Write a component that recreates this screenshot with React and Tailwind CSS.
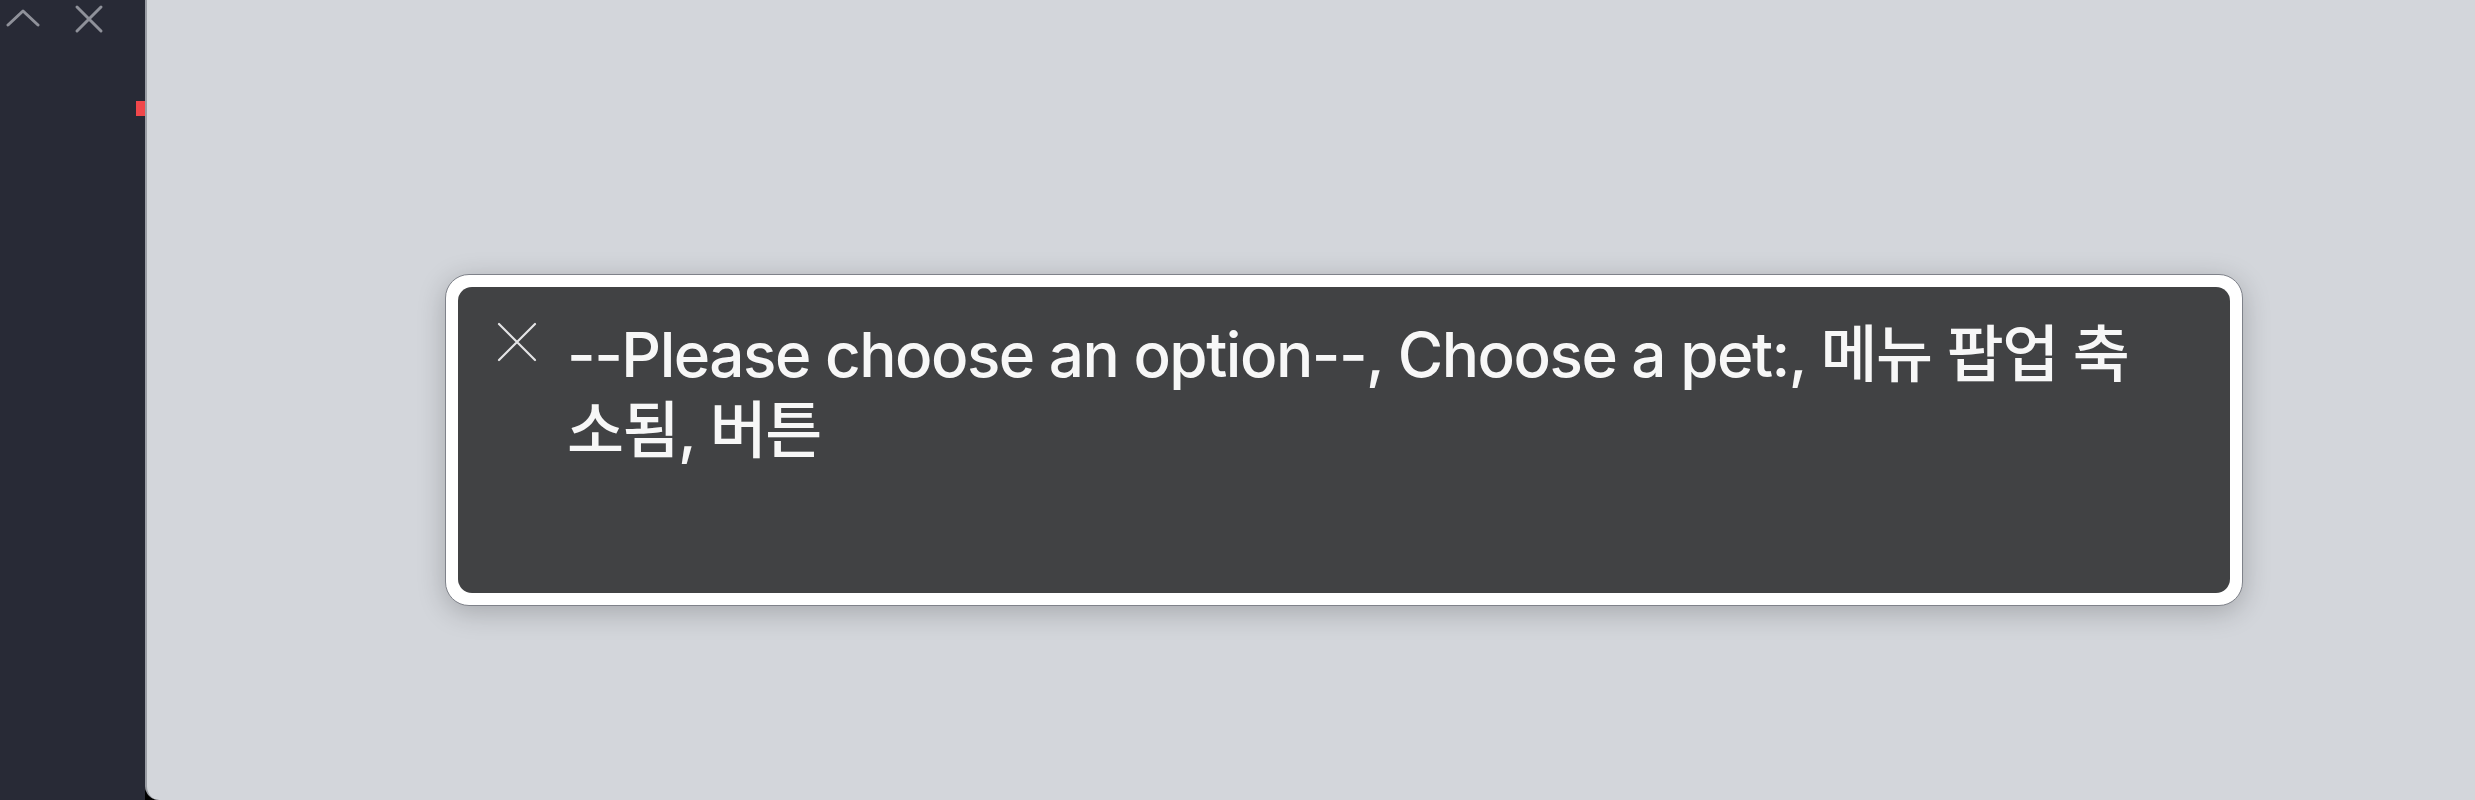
import React from "react";

export default function App() {
  return (
    <div className="w-[2475px] h-[800px] flex bg-black overflow-hidden">
      <div className="w-[145px] h-full bg-[#282a36] flex flex-col">
        <div className="flex items-start h-[40px]">
          <svg className="ml-[6px] mt-[8px]" width="34" height="20" viewBox="0 0 34 20" fill="none">
            <path d="M2 17 L17 3 L32 17" stroke="#8f919a" strokeWidth="3" strokeLinecap="round" strokeLinejoin="round" />
          </svg>
          <svg className="ml-[34px] mt-[4px]" width="30" height="30" viewBox="0 0 30 30" fill="none">
            <path d="M3 3 L27 27 M27 3 L3 27" stroke="#8f919a" strokeWidth="3" strokeLinecap="round" />
          </svg>
        </div>
        <div className="flex justify-end mt-[61px]">
          <div className="w-[9px] h-[15px] bg-[#f0474b]" />
        </div>
      </div>
      <div className="flex-1 h-full bg-[#d3d6db] rounded-bl-[14px] border-l-2 border-[#9a9da4] pl-[298px] pt-[274px]">
        <div className="w-[1798px] h-[332px] rounded-[24px] bg-white border border-[#7f828a] p-[12px] shadow-[0_6px_28px_rgba(0,0,0,0.22)]">
          <div className="w-full h-full rounded-[14px] bg-[#414244] flex pl-[39px] pt-[30px]">
            <svg className="mt-[5px] shrink-0" width="40" height="40" viewBox="0 0 40 40" fill="none">
              <path d="M2 2 L38 38 M38 2 L2 38" stroke="#e4e4e6" strokeWidth="2.2" strokeLinecap="round" />
            </svg>
            <div
              className="ml-[30px] w-[1592px] text-[62px] leading-[76px] font-medium tracking-[-0.024em] text-[#f7f7f7]"
              style={{ fontFamily: 'Inter, "Noto Sans CJK KR", sans-serif' }}
            >
              --Please choose an option--, Choose a pet:, 메뉴 팝업 축소됨, 버튼
            </div>
          </div>
        </div>
      </div>
    </div>
  );
}
